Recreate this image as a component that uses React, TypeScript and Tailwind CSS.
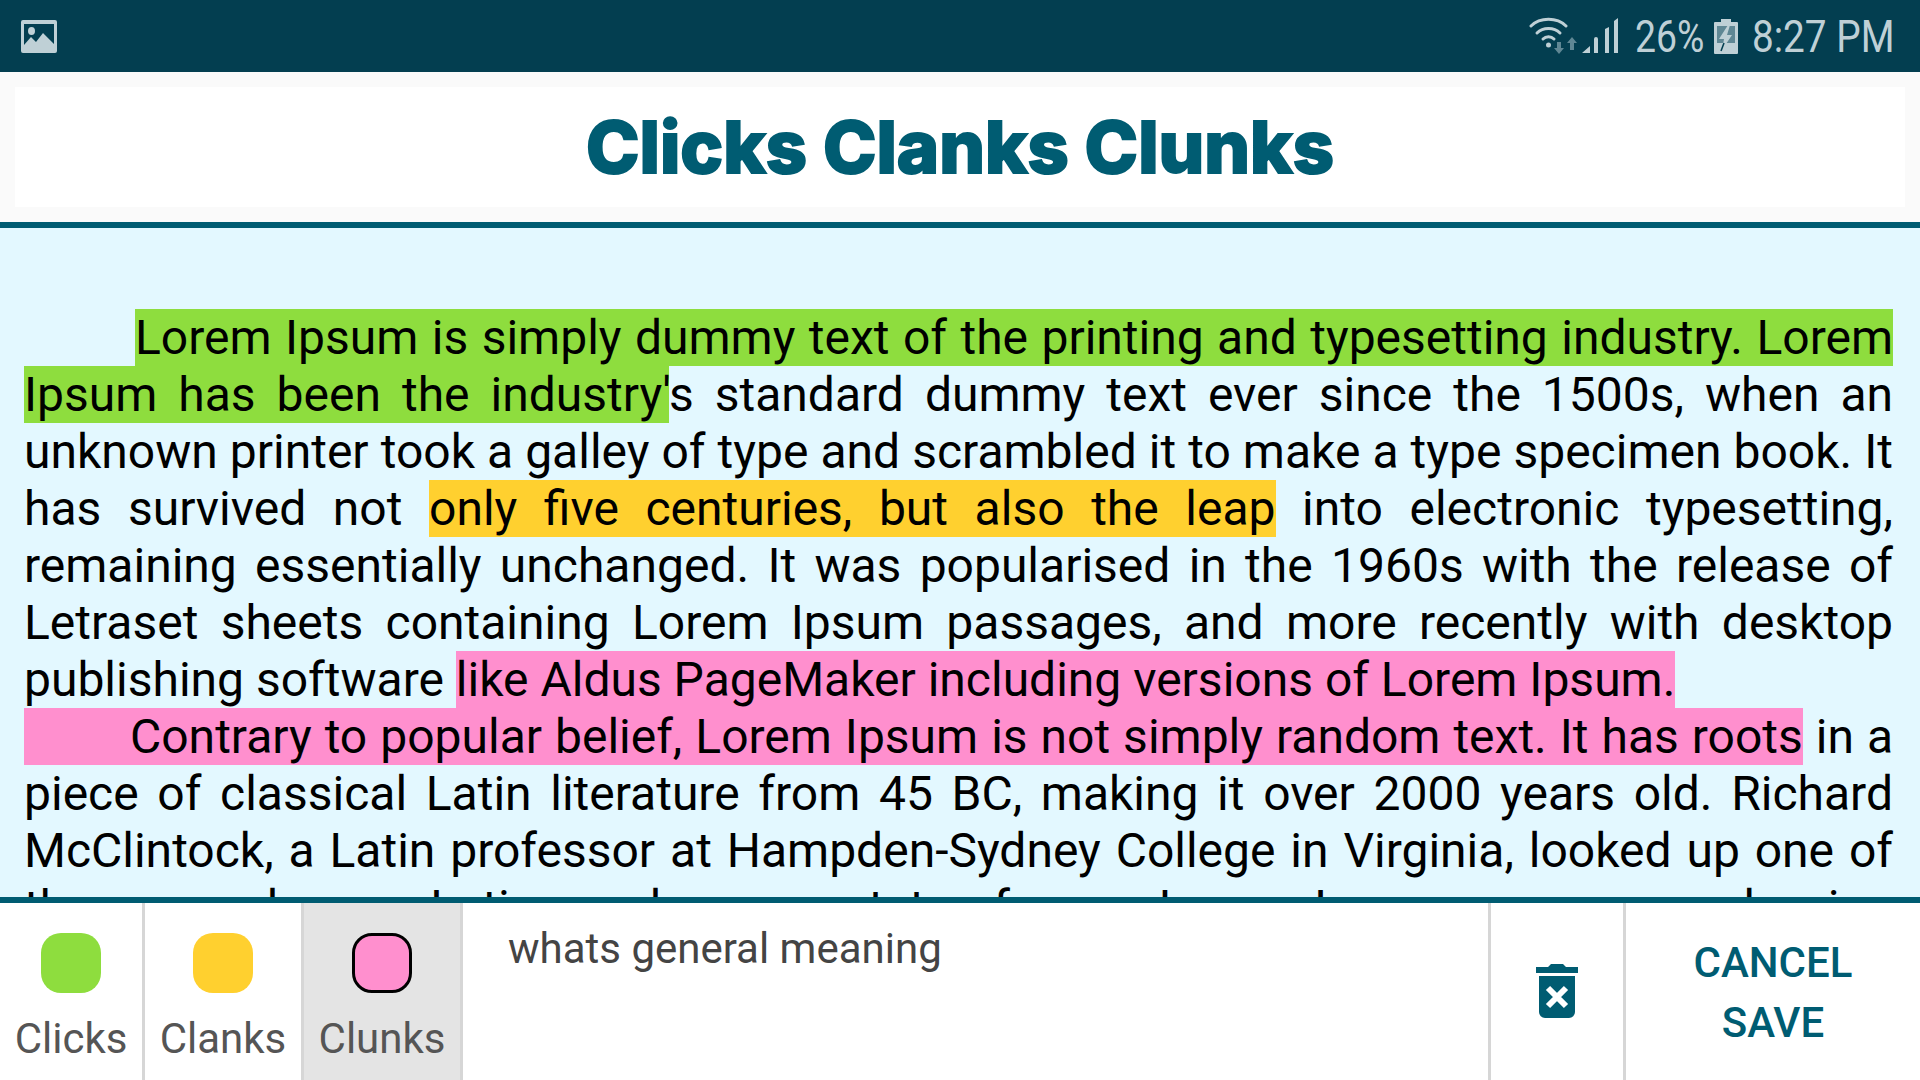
const teal = "text-[#005c72]";

type Seg = { text: string; color?: "green" | "yellow" | "pink"; indent?: number };

const highlight = {
  green: "bg-[#8edd3e]",
  yellow: "bg-[#ffd02f]",
  pink: "bg-[#ff8fce]",
};

const lines: { segs: Seg[]; last?: boolean; pad?: number }[] = [
  { pad: 111, segs: [{ text: "Lorem Ipsum is simply dummy text of the printing and typesetting industry. Lorem", color: "green" }] },
  { segs: [{ text: "Ipsum has been the industry'", color: "green" }, { text: "s standard dummy text ever since the 1500s, when an" }] },
  { segs: [{ text: "unknown printer took a galley of type and scrambled it to make a type specimen book. It" }] },
  { segs: [{ text: "has survived not " }, { text: "only five centuries, but also the leap", color: "yellow" }, { text: " into electronic typesetting," }] },
  { segs: [{ text: "remaining essentially unchanged. It was popularised in the 1960s with the release of" }] },
  { segs: [{ text: "Letraset sheets containing Lorem Ipsum passages, and more recently with desktop" }] },
  { last: true, segs: [{ text: "publishing software " }, { text: "like Aldus PageMaker including versions of Lorem Ipsum.", color: "pink" }] },
  { segs: [{ text: "Contrary to popular belief, Lorem Ipsum is not simply random text. It has roots", color: "pink", indent: 106 }, { text: " in a" }] },
  { segs: [{ text: "piece of classical Latin literature from 45 BC, making it over 2000 years old. Richard" }] },
  { segs: [{ text: "McClintock, a Latin professor at Hampden-Sydney College in Virginia, looked up one of" }] },
  { segs: [{ text: "the more obscure Latin words, consectetur, from a Lorem Ipsum passage, and going" }] },
];

function ImageIcon() {
  return (
    <svg width="36" height="33" viewBox="0 0 36 33" className="ml-[21px]">
      <path fillRule="evenodd" fill="#bfd0d6" d="M2 0h32a2 2 0 0 1 2 2v29a2 2 0 0 1-2 2H2a2 2 0 0 1-2-2V2a2 2 0 0 1 2-2zM3 4v21l7-8 5 5 7-9 11 11V4z" />
      <ellipse cx="10.500" cy="11" rx="3.500" ry="4" fill="#bfd0d6" />
    </svg>
  );
}

function WifiSignal() {
  return (
    <svg width="90" height="40" viewBox="0 0 90 40" fill="none">
      <g stroke="#bfd0d6" strokeWidth="3" strokeLinecap="round">
        <path d="M2 10C11 1 28 1 37 10" />
        <path d="M8 17C14 11 25 11 31 17" />
        <path d="M14 23C17 20 22 20 25 23" />
      </g>
      <circle cx="19.500" cy="29" r="2.500" fill="#bfd0d6" />
      <path fill="#5f8794" d="M28 26h4v6h3l-5 6-5-6h3zM41 34h4v-7h3l-5-6-5 6h3z" />
      <path fill="#bfd0d6" d="M53 37l8-7v7zM65 37V23a2 2 0 0 1 4 0v14zM76 37V13l4-2v26zM85 37V5l4-3v35z" />
    </svg>
  );
}

function BatteryIcon() {
  return (
    <svg width="24" height="35" viewBox="0 0 24 35" className="ml-[10px] mr-[14px]">
      <path fill="#bfd0d6" d="M7 0h10v3h6a1 1 0 0 1 1 1v30a1 1 0 0 1-1 1H1a1 1 0 0 1-1-1V4a1 1 0 0 1 1-1h6z" />
      <rect x="3" y="7" width="18" height="17" fill="#5f8794" />
      <path fill="#bfd0d6" d="M14 6L5 20h5l-2 11 10-15h-5l3-10z" />
      <path stroke="#033e50" strokeWidth="1.500" d="M10 24l-3 8" />
    </svg>
  );
}

function TrashIcon() {
  return (
    <svg width="42" height="54" viewBox="0 0 42 54">
      <path fill="#005c72" d="M0 3h12l3-3h12l3 3h12v6H0zM3 12h36v36a6 6 0 0 1-6 6H9a6 6 0 0 1-6-6z" />
      <path stroke="#fff" strokeWidth="6" d="M12 24l18 18M30 24L12 42" />
    </svg>
  );
}

function ColorTab({ label, color, width, active }: { label: string; color: string; width: string; active?: boolean }) {
  return (
    <div className={`${width} ${active ? "bg-[#e4e4e4]" : ""} flex flex-col items-center border-r-[3px] border-[#d6d6d6] pt-[30px]`}>
      <div className={`${color} w-[60px] h-[60px] rounded-[20px] ${active ? "border-[3px] border-black" : ""}`} />
      <span className="mt-[16px] text-[42px] leading-[60px] text-[#555555]">{label}</span>
    </div>
  );
}

export default function App() {
  return (
    <div className="w-full h-screen overflow-hidden flex flex-col bg-white font-['Roboto',sans-serif]">
      <div className="h-[72px] shrink-0 bg-[#033e50] flex items-center justify-between">
        <ImageIcon />
        <div className="flex items-center pr-[27px] text-[#bfd0d6] text-[45px] font-normal leading-[72px]">
          <WifiSignal />
          <span className="ml-[16px] w-[69px] pt-[2px] whitespace-nowrap origin-left scale-x-[0.83]">26%</span>
          <BatteryIcon />
          <span className="w-[141px] pt-[2px] whitespace-nowrap origin-left scale-x-[0.86]">8:27 PM</span>
        </div>
      </div>

      <div className="h-[150px] shrink-0 bg-[#fafafa] p-[15px]">
        <div className="h-full bg-white flex items-center justify-center">
          <span className={`${teal} font-['Inter',sans-serif] font-extrabold text-[72px] [-webkit-text-stroke:2px_#005c72]`}>
            Clicks Clanks Clunks
          </span>
        </div>
      </div>

      <div className="flex-1 min-h-0 overflow-hidden bg-[#e3f8ff] border-y-[6px] border-[#005c72] pt-[81px] pl-[24px] pr-[27px] text-black text-[48px] leading-[57px]">
        {lines.map((line, i) => (
          <div
            key={i}
            className={`h-[57px] whitespace-pre-wrap text-justify ${line.last ? "" : "[text-align-last:justify]"} ${line.pad ? "pl-[111px]" : ""}`}
          >
            {line.segs.map((seg, j) => (
              <span key={j} className={seg.color ? `${highlight[seg.color]} py-[0.4px]` : ""}>
                {seg.indent ? <span className="inline-block w-[106px]" /> : null}
                {seg.text}
              </span>
            ))}
          </div>
        ))}
      </div>

      <div className="h-[177px] shrink-0 flex">
        <ColorTab label="Clicks" color="bg-[#8edd3e]" width="w-[145px]" />
        <ColorTab label="Clanks" color="bg-[#ffd02f]" width="w-[159px]" />
        <ColorTab label="Clunks" color="bg-[#ff8fce]" width="w-[159px]" active />
        <div className="flex-1 pl-[45px] pt-[16px] text-[42px] leading-[60px] text-[#444444]">whats general meaning</div>
        <div className="w-[138px] border-x-[3px] border-[#d6d6d6] flex justify-center pt-[61px]">
          <TrashIcon />
        </div>
        <div className={`w-[294px] flex flex-col items-center pt-[30px] text-[42px] leading-[60px] font-medium ${teal}`}>
          <span>CANCEL</span>
          <span>SAVE</span>
        </div>
      </div>
    </div>
  );
}
